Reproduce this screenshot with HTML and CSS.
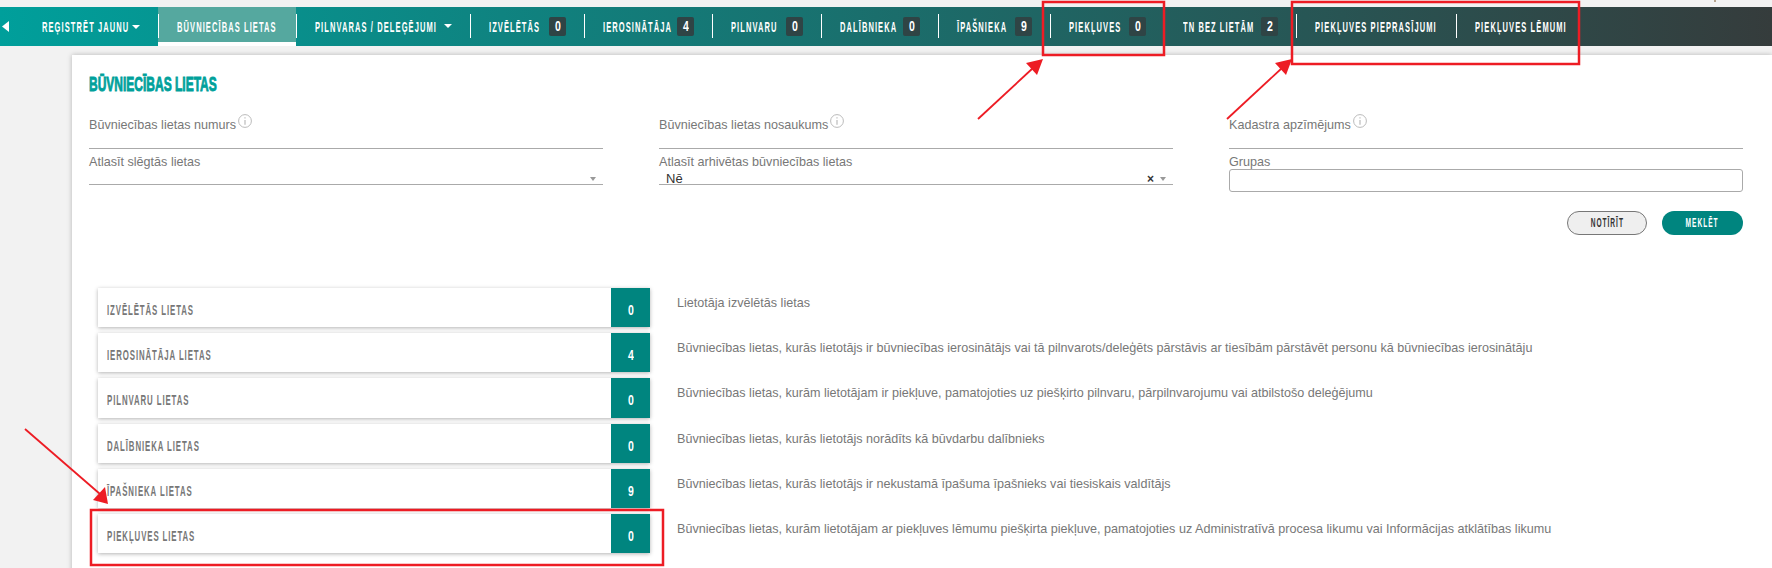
FILE: index.html
```html
<!DOCTYPE html>
<html lang="lv">
<head>
    <meta charset="UTF-8">
    <meta name="viewport" content="width=device-width, initial-scale=1.0">
    <title>Būvniecības lietas</title>
    <link rel="stylesheet" href="styles.css">
</head>
<body>
    <div class="top-mark"></div>
    <nav class="nav-bar">
        <div class="nav-item nav-first">
            <svg class="nav-back" width="7" height="11" viewBox="0 0 7 11"><path d="M7 0V11L0 5.5Z" fill="#fff"/></svg>
            <span class="nav-text">Reģistrēt jaunu</span><span class="nav-caret"></span>
        </div>
        <div class="nav-item active"><div class="nav-link"><span class="nav-text">Būvniecības lietas</span></div></div>
        <div class="nav-item"><div class="nav-link"><span class="nav-text">Pilnvaras / deleģējumi</span><span class="nav-caret"></span></div></div>
        <div class="nav-item"><div class="nav-link"><span class="nav-text">Izvēlētās</span><span class="nav-badge"><span class="digit">0</span></span></div></div>
        <div class="nav-item"><div class="nav-link"><span class="nav-text">Ierosinātāja</span><span class="nav-badge"><span class="digit">4</span></span></div></div>
        <div class="nav-item"><div class="nav-link"><span class="nav-text">Pilnvaru</span><span class="nav-badge"><span class="digit">0</span></span></div></div>
        <div class="nav-item"><div class="nav-link"><span class="nav-text">Dalībnieka</span><span class="nav-badge"><span class="digit">0</span></span></div></div>
        <div class="nav-item"><div class="nav-link"><span class="nav-text">Īpašnieka</span><span class="nav-badge"><span class="digit">9</span></span></div></div>
        <div class="nav-item"><div class="nav-link"><span class="nav-text">Piekļuves</span><span class="nav-badge"><span class="digit">0</span></span></div></div>
        <div class="nav-item"><div class="nav-link no-line"><span class="nav-text">TN bez lietām</span><span class="nav-badge"><span class="digit">2</span></span></div></div>
        <div class="nav-item"><div class="nav-link"><span class="nav-text">Piekļuves pieprasījumi</span></div></div>
        <div class="nav-item"><div class="nav-link"><span class="nav-text">Piekļuves lēmumi</span></div></div>
    </nav>

    <main class="panel">
        <h1 class="panel-title">Būvniecības lietas</h1>

        <div class="filter-grid">
            <div class="field">
                <label>Būvniecības lietas numurs<svg class="info" width="14" height="14" viewBox="0 0 14 14"><circle cx="7" cy="7" r="6.4" fill="none" stroke="#bbb"/><path d="M7 3.2v1.4M7 6v4.8" stroke="#bbb" stroke-width="1.2"/></svg></label>
            </div>
            <div class="field">
                <label>Būvniecības lietas nosaukums<svg class="info" width="14" height="14" viewBox="0 0 14 14"><circle cx="7" cy="7" r="6.4" fill="none" stroke="#bbb"/><path d="M7 3.2v1.4M7 6v4.8" stroke="#bbb" stroke-width="1.2"/></svg></label>
            </div>
            <div class="field">
                <label>Kadastra apzīmējums<svg class="info" width="14" height="14" viewBox="0 0 14 14"><circle cx="7" cy="7" r="6.4" fill="none" stroke="#bbb"/><path d="M7 3.2v1.4M7 6v4.8" stroke="#bbb" stroke-width="1.2"/></svg></label>
            </div>
            <div class="field field-select">
                <label>Atlasīt slēgtās lietas</label>
                <div class="select-value"><span></span><i class="select-caret"></i></div>
            </div>
            <div class="field field-select">
                <label>Atlasīt arhivētas būvniecības lietas</label>
                <div class="select-value"><span>Nē</span><b class="select-clear">×</b><i class="select-caret"></i></div>
            </div>
            <div class="field field-input">
                <label>Grupas</label>
                <div class="text-input"></div>
            </div>
        </div>

        <div class="actions">
            <button class="btn btn-clear"><span>Notīrīt</span></button>
            <button class="btn btn-search"><span>Meklēt</span></button>
        </div>

        <div class="case-list">
            <div class="case-row">
                <div class="case-card"><span class="case-name">Izvēlētās lietas</span><span class="case-count"><span class="digit">0</span></span></div>
                <p class="case-desc">Lietotāja izvēlētās lietas</p>
            </div>
            <div class="case-row">
                <div class="case-card"><span class="case-name">Ierosinātāja lietas</span><span class="case-count"><span class="digit">4</span></span></div>
                <p class="case-desc">Būvniecības lietas, kurās lietotājs ir būvniecības ierosinātājs vai tā pilnvarots/deleģēts pārstāvis ar tiesībām pārstāvēt personu kā būvniecības ierosinātāju</p>
            </div>
            <div class="case-row tall">
                <div class="case-card"><span class="case-name">Pilnvaru lietas</span><span class="case-count"><span class="digit">0</span></span></div>
                <p class="case-desc">Būvniecības lietas, kurām lietotājam ir piekļuve, pamatojoties uz piešķirto pilnvaru, pārpilnvarojumu vai atbilstošo deleģējumu</p>
            </div>
            <div class="case-row">
                <div class="case-card"><span class="case-name">Dalībnieka lietas</span><span class="case-count"><span class="digit">0</span></span></div>
                <p class="case-desc">Būvniecības lietas, kurās lietotājs norādīts kā būvdarbu dalībnieks</p>
            </div>
            <div class="case-row">
                <div class="case-card"><span class="case-name">Īpašnieka lietas</span><span class="case-count"><span class="digit">9</span></span></div>
                <p class="case-desc">Būvniecības lietas, kurās lietotājs ir nekustamā īpašuma īpašnieks vai tiesiskais valdītājs</p>
            </div>
            <div class="case-row">
                <div class="case-card"><span class="case-name">Piekļuves lietas</span><span class="case-count"><span class="digit">0</span></span></div>
                <p class="case-desc">Būvniecības lietas, kurām lietotājam ar piekļuves lēmumu piešķirta piekļuve, pamatojoties uz Administratīvā procesa likumu vai Informācijas atklātības likumu</p>
            </div>
        </div>
    </main>

    <!-- red markup drawn on top of the page -->
    <svg class="markup" width="1772" height="568" viewBox="0 0 1772 568">
        <g fill="none" stroke="#ed1c24">
            <rect x="1043" y="2" width="121" height="53" stroke-width="2.5"/>
            <rect x="1292" y="2" width="287" height="62" stroke-width="2.5"/>
            <rect x="91" y="510" width="572" height="55" stroke-width="2.5"/>
            <path d="M978 119L1033 68" stroke-width="1.8"/>
            <path d="M1227 119L1282 68" stroke-width="1.8"/>
            <path d="M25 429L100 494" stroke-width="1.8"/>
        </g>
        <g fill="#ed1c24">
            <path d="M1043 59L1037 75L1026 63Z"/>
            <path d="M1292 59L1286 75L1275 63Z"/>
            <path d="M108 504L93 500L105 487Z"/>
        </g>
    </svg>
</body>
</html>
```

FILE: styles.css
```css
body {
    margin: 0;
    height: 568px;
    overflow: hidden;
    position: relative;
    background: #f2f2f2;
    font-family: "Liberation Sans", Arial, sans-serif;
    font-size: 12.6px;
    color: #777;
}

.top-mark {
    position: absolute;
    top: 0;
    left: 1714px;
    width: 2px;
    height: 2px;
    background: #b5a48f;
}

.nav-bar {
    height: 39px;
    display: grid;
    grid-template-columns: 158px 138px 174px 114px 128px 109px 117px 112px 114px 132px 160px 1fr;
    background: linear-gradient(to right, #009f9b, #353c3c);
    position: relative;
    top: 7px;
}

.nav-item {
    display: flex;
    align-items: center;
    height: 39px;
}

.nav-item.active {
    background: #55a89f;
    box-shadow: inset 0 -4px 0 #fff;
}

.nav-first {
    padding: 0 18px 0 2px;
}

.nav-back {
    margin-right: 33px;
}

.nav-link {
    flex: 1;
    display: flex;
    align-items: center;
    height: 24px;
    padding: 0 18px;
    border-left: 1px solid #fff;
    margin-top: -1px;
}

.nav-link.no-line {
    border-left-color: transparent;
}

/* the display face of the original is much narrower than anything installed */
.nav-text {
    flex: 1;
    width: 0;
    font-size: 15px;
    font-weight: bold;
    letter-spacing: 2.2px;
    text-transform: uppercase;
    color: #fff;
    white-space: nowrap;
    transform: scaleX(0.5);
    transform-origin: left center;
}

.nav-caret {
    border-left: 4px solid transparent;
    border-right: 4px solid transparent;
    border-top: 4px solid #fff;
}

.nav-badge {
    width: 17px;
    height: 19px;
    line-height: 19px;
    border-radius: 2px;
    text-align: center;
    background: #2f4445;
    color: #fff;
    font-weight: bold;
    font-size: 14px;
}

.digit {
    display: inline-block;
    transform: scaleX(0.75);
}

.panel {
    position: relative;
    top: 7px;
    margin: 9px 0 0 72px;
    padding: 17px 29px 0 17px;
    height: 520px;
    background: #fff;
    box-shadow: 0 0 5px rgba(0, 0, 0, 0.25);
}

.panel-title {
    margin: 0 0 18px;
    height: 24px;
    line-height: 24px;
    font-size: 20px;
    font-weight: bold;
    text-transform: uppercase;
    white-space: nowrap;
    color: #00a19b;
    -webkit-text-stroke: 0.9px #00a19b;
    transform: scaleX(0.6);
    transform-origin: left center;
}

.filter-grid {
    display: grid;
    grid-template-columns: repeat(3, 514px);
    column-gap: 56px;
    row-gap: 3px;
}

.field {
    height: 34px;
    border-bottom: 1px solid #aaa;
    line-height: 20px;
}

.field-select {
    height: 32px;
}

.field-input {
    height: 41px;
    border-bottom: none;
    margin-bottom: -8px;
}

.info {
    margin-left: 2px;
    vertical-align: 1px;
}

.select-value {
    display: flex;
    align-items: center;
    height: 13px;
    padding: 0 7px;
    font-size: 13px;
    color: #333;
}

.select-value span {
    flex: 1;
}

.select-clear {
    font-size: 12px;
    margin-right: 6px;
    color: #333;
}

.select-caret {
    border-left: 3px solid transparent;
    border-right: 3px solid transparent;
    border-top: 4px solid #999;
}

.text-input {
    height: 21px;
    border: 1px solid #aaa;
    border-radius: 3px;
    margin-top: -3px;
}

.actions {
    display: flex;
    justify-content: flex-end;
    gap: 15px;
    margin-top: 26px;
}

.btn {
    height: 24px;
    padding: 0;
    border-radius: 12px;
    font-family: "Liberation Sans", sans-serif;
    font-size: 12px;
    font-weight: bold;
    letter-spacing: 1.8px;
    text-transform: uppercase;
}

.btn span {
    display: inline-block;
    transform: scaleX(0.55);
}

.btn-clear {
    width: 80px;
    background: #efefef;
    border: 1px solid #777;
    color: #333;
}

.btn-search {
    width: 81px;
    background: #00857f;
    border: none;
    color: #fff;
}

.case-list {
    margin: 53px 0 0 9px;
}

.case-row {
    display: flex;
    height: 39px;
    margin-bottom: 6px;
}

.case-row.tall {
    height: 40px;
}

.case-card {
    display: flex;
    width: 552px;
    flex: none;
    background: #fff;
    box-shadow: 0 1px 4px rgba(0, 0, 0, 0.3);
}

.case-name {
    flex: 1;
    margin-left: 9px;
    padding-top: 4px;
    line-height: 36px;
    font-size: 14px;
    font-weight: bold;
    letter-spacing: 1.6px;
    text-transform: uppercase;
    color: #777;
    white-space: nowrap;
    transform: scaleX(0.56);
    transform-origin: left center;
}

.case-count {
    width: 39px;
    padding-top: 4px;
    line-height: 36px;
    text-align: center;
    background: #00857f;
    color: #fff;
    font-size: 14px;
    font-weight: bold;
}

.case-desc {
    margin: 5px 0 0 27px;
    line-height: 20px;
    white-space: nowrap;
}

.markup {
    position: absolute;
    top: 0;
    left: 0;
    pointer-events: none;
}
```
